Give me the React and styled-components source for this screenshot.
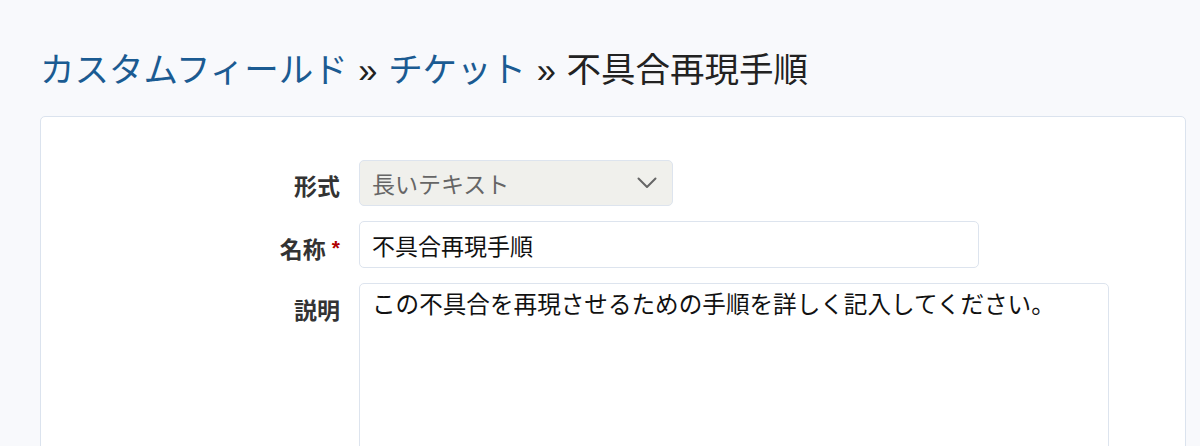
import React from "react";
import styled, { createGlobalStyle } from "styled-components";

const GlobalStyle = createGlobalStyle`
  html, body {
    margin: 0;
    padding: 0;
    background: #f8f9fc;
  }
  body {
    font-family: "Liberation Sans", "Noto Sans CJK JP", sans-serif;
    color: #222;
  }
  * { box-sizing: border-box; }
`;

const Page = styled.div`
  padding: 50px 14px 0 40px;
  height: 446px;
  overflow: hidden;
`;

const Title = styled.h1`
  margin: 0 0 26px;
  font-size: 34.5px;
  line-height: 40px;
  font-weight: 400;
  color: #222;
`;

const Crumb = styled.a`
  color: #1b5b92;
  text-decoration: none;
`;

const Sep = styled.span`
  color: #222;
  margin: 0 1px;
`;

const Panel = styled.div`
  background: #fff;
  border: 1px solid #dbe3ee;
  border-radius: 5px;
  padding: 43px 0 40px;
  min-height: 400px;
`;

const Form = styled.div`
  display: grid;
  grid-template-columns: 318px 1fr;
  row-gap: 15px;
  align-items: start;
`;

const Label = styled.label`
  display: block;
  text-align: right;
  padding-right: 19px;
  padding-top: ${(p) => p.$top}px;
  font-size: 23px;
  line-height: 32px;
  font-weight: 700;
  color: #333;
`;

const Req = styled.span`
  color: #b00000;
  margin-left: 6px;
  font-size: 21px;
  vertical-align: 3px;
`;

const SelectBox = styled.div`
  width: 314px;
  height: 46px;
  display: flex;
  align-items: center;
  justify-content: space-between;
  padding: 0 15px 0 12px;
  background: #f0f0ec;
  border: 1px solid #dde4ee;
  border-radius: 5px;
  font-size: 23px;
  color: #666;
`;

const TextInput = styled.input`
  display: block;
  width: ${(p) => p.$w}px;
  height: 47px;
  padding: 0 12px;
  border: 1px solid #dde4ee;
  border-radius: 5px;
  background: #fff;
  font-family: "Liberation Sans", "Noto Sans CJK JP", sans-serif;
  font-size: 23px;
  color: #111;
  outline: none;
`;

const TextArea = styled.textarea`
  display: block;
  width: 750px;
  height: 220px;
  padding: 9px 12px;
  border: 1px solid #dde4ee;
  border-radius: 5px;
  background: #fff;
  font-family: "Liberation Sans", "Noto Sans CJK JP", sans-serif;
  font-size: 23.6px;
  line-height: 24px;
  color: #111;
  resize: none;
  outline: none;
`;

const Chevron = () => (
  <svg width="20" height="12" viewBox="0 0 20 12" fill="none">
    <path d="M1.5 1.5 L10 10 L18.5 1.5" stroke="#666" strokeWidth="2" strokeLinecap="round" strokeLinejoin="round" />
  </svg>
);

export default function App() {
  return (
    <>
      <GlobalStyle />
      <Page>
        <Title>
          <Crumb href="#">カスタムフィールド</Crumb>
          {" "}<Sep>»</Sep>{" "}
          <Crumb href="#">チケット</Crumb>
          {" "}<Sep>»</Sep>{" "}
          不具合再現手順
        </Title>
        <Panel>
          <Form>
            <Label $top={11}>形式</Label>
            <SelectBox>
              <span>長いテキスト</span>
              <Chevron />
            </SelectBox>
            <Label $top={11}>
              名称<Req>*</Req>
            </Label>
            <TextInput $w={620} readOnly value="不具合再現手順" />
            <Label $top={12}>説明</Label>
            <TextArea readOnly value="この不具合を再現させるための手順を詳しく記入してください。" />
          </Form>
        </Panel>
      </Page>
    </>
  );
}
